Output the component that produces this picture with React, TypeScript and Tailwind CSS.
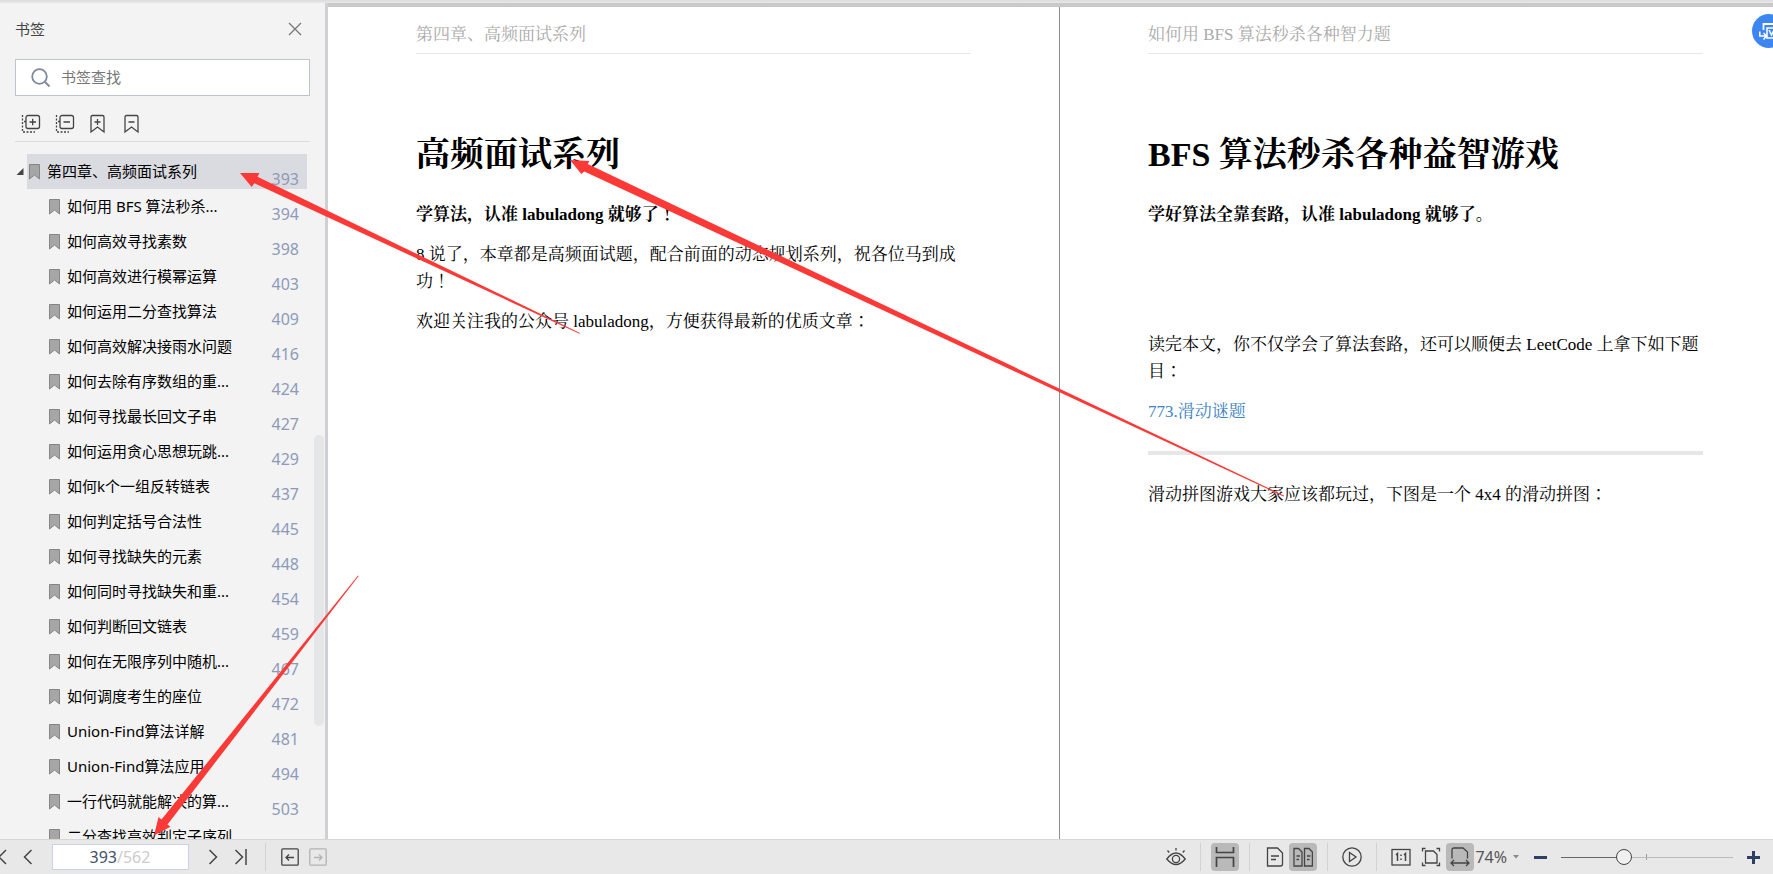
import type { ReactNode } from 'react'

interface Bookmark {
  title: string
  page: number
}

const BOOKMARKS: Bookmark[] = [
  { title: '如何用 BFS 算法秒杀...', page: 394 },
  { title: '如何高效寻找素数', page: 398 },
  { title: '如何高效进行模幂运算', page: 403 },
  { title: '如何运用二分查找算法', page: 409 },
  { title: '如何高效解决接雨水问题', page: 416 },
  { title: '如何去除有序数组的重...', page: 424 },
  { title: '如何寻找最长回文子串', page: 427 },
  { title: '如何运用贪心思想玩跳...', page: 429 },
  { title: '如何k个一组反转链表', page: 437 },
  { title: '如何判定括号合法性', page: 445 },
  { title: '如何寻找缺失的元素', page: 448 },
  { title: '如何同时寻找缺失和重...', page: 454 },
  { title: '如何判断回文链表', page: 459 },
  { title: '如何在无限序列中随机...', page: 467 },
  { title: '如何调度考生的座位', page: 472 },
  { title: 'Union-Find算法详解', page: 481 },
  { title: 'Union-Find算法应用', page: 494 },
  { title: '一行代码就能解决的算...', page: 503 },
]

interface IconProps {
  children: ReactNode
  width?: number
  height?: number
  className?: string
}

function Icon({ children, width = 20, height = 20, className }: IconProps) {
  return (
    <svg
      width={width}
      height={height}
      viewBox={`0 0 ${width} ${height}`}
      fill="none"
      stroke="currentColor"
      strokeWidth="1.3"
      className={className}
      aria-hidden="true"
    >
      {children}
    </svg>
  )
}

function BookmarkIcon() {
  return (
    <svg width="11" height="16" viewBox="0 0 11 16" className="shrink-0" aria-hidden="true">
      <path d="M.5 .5h10v14.5l-5-4-5 4z" fill="#a6a6a6" stroke="#858585" />
    </svg>
  )
}

function Sidebar() {
  return (
    <aside className="flex w-[328px] shrink-0 flex-col border-r-[3px] border-[#cfcfd4] bg-[#f3f3f3] pt-2">
      <div className="flex h-9 items-center justify-between pr-[23px] pl-[15px]">
        <h2 className="text-[15px] text-[#444]">书签</h2>
        <button type="button" aria-label="关闭">
          <Icon width={14} height={14} className="text-[#777]">
            <path d="M1 1l12 12M13 1L1 13" />
          </Icon>
        </button>
      </div>

      <label className="mx-[15px] mt-3 flex h-[37px] items-center gap-[10px] border border-[#bfc2cf] bg-white pl-[15px]">
        <Icon className="text-[#8089a0]">
          <circle cx="8.5" cy="8.5" r="7.3" strokeWidth="1.8" />
          <path d="M14 14l4.500 4.500" strokeWidth="2" />
        </Icon>
        <input
          type="text"
          aria-label="书签查找"
          placeholder="书签查找"
          className="min-w-0 flex-1 text-[15px] outline-none placeholder:text-[#777]"
        />
      </label>

      <div className="mx-[15px] flex h-[46px] items-center gap-[14px] border-b border-[#dcdce0] pt-[10px] pl-[6px] text-[#444]">
        <button type="button" aria-label="展开全部">
          <Icon>
            <rect x="5" y="1.500" width="13.500" height="13" rx="2" />
            <path d="M8.500 8h6.500M11.700 4.800v6.500M3 7.500h2" />
            <path d="M1.500 1v17M2 18h12" strokeDasharray="2 1.500" />
          </Icon>
        </button>
        <button type="button" aria-label="收起全部">
          <Icon>
            <rect x="5" y="1.500" width="13.500" height="13" rx="2" />
            <path d="M8.500 8h6.500M3 7.500h2" />
            <path d="M1.500 1v17M2 18h12" strokeDasharray="2 1.500" />
          </Icon>
        </button>
        <button type="button" aria-label="添加书签">
          <Icon>
            <path d="M2 18V3q0-1.500 1.500-1.500h10Q15 1.500 15 3v15l-6.500-5zM5.500 8h6M8.500 5v6" />
          </Icon>
        </button>
        <button type="button" aria-label="删除书签">
          <Icon>
            <path d="M2 18V3q0-1.500 1.500-1.500h10Q15 1.500 15 3v15l-6.500-5zM5.500 8h6" />
          </Icon>
        </button>
      </div>

      <div className="relative mt-3 min-h-0 flex-1 overflow-hidden">
        <div className="flex pl-4">
          <svg width="11" height="35" viewBox="0 0 11 35" className="shrink-0" aria-hidden="true">
            <path d="M7.500 14v7h-7z" fill="#444" />
          </svg>
          <div className="mr-[18px] flex h-[35px] flex-1 items-center bg-[#dadbe0] pr-2 pl-[2px]">
            <BookmarkIcon />
            <span className="ml-[7px] flex-1 text-[15px] text-black">第四章、高频面试系列</span>
            <span className="self-end text-base leading-5 text-[#8c9ab8]">393</span>
          </div>
        </div>
        <ul>
          {BOOKMARKS.map((item) => (
            <li key={item.title} className="mr-[18px] flex h-[35px] items-center pr-2 pl-[49px]">
              <BookmarkIcon />
              <span className="ml-[7px] flex-1 text-[15px] whitespace-nowrap text-black">
                {item.title}
              </span>
              <span className="self-end text-base leading-5 text-[#8c9ab8]">{item.page}</span>
            </li>
          ))}
          {/* scrolled half out of view */}
          <li className="mr-[18px] flex h-[35px] items-center pr-2 pl-[49px]">
            <BookmarkIcon />
            <span className="ml-[7px] flex-1 text-[15px] whitespace-nowrap text-black">
              二分查找高效判定子序列
            </span>
          </li>
        </ul>
        <div className="absolute top-[281px] right-[1px] h-[291px] w-[10px] rounded-full bg-[#e5e6e8]" />
      </div>
    </aside>
  )
}

interface PageProps {
  header: string
  title: string
  children: ReactNode
}

function Page({ header, title, children }: PageProps) {
  return (
    <article className="w-[731px] shrink-0 bg-white px-[88px] pt-4 text-[17px] leading-[27px] text-black">
      <header className="border-b border-[#e8e8e8] pb-[6px] leading-6 text-[#aaa]">{header}</header>
      <h1 className="mt-[77px] mb-[22px] text-[34px] leading-[48px] font-bold">{title}</h1>
      <div className="flex flex-col gap-[13px]">{children}</div>
    </article>
  )
}

function Divider() {
  return <span className="h-7 w-px shrink-0 bg-[#d2d2d2]" />
}

function ToolButton({
  label,
  active = false,
  children,
}: {
  label: string
  active?: boolean
  children: ReactNode
}) {
  return (
    <button
      type="button"
      aria-label={label}
      className={
        active
          ? 'flex size-7 shrink-0 items-center justify-center rounded bg-[#b9b9b9]'
          : 'flex size-7 shrink-0 items-center justify-center'
      }
    >
      {children}
    </button>
  )
}

function StatusBar() {
  return (
    <footer className="flex h-[35px] shrink-0 items-center justify-between border-t border-[#d6d6d6] bg-[#e8e8e8] text-[#444]">
      <div className="flex items-center">
        <button type="button" aria-label="第一页">
          <Icon width={14} height={16}>
            <path d="M6 1L-1 8l7 7" strokeWidth="1.5" />
          </Icon>
        </button>
        <button type="button" aria-label="上一页" className="mr-5 ml-[9px]">
          <Icon width={9} height={16}>
            <path d="M8.500 1l-7 7 7 7" strokeWidth="1.500" />
          </Icon>
        </button>
        <label className="flex h-[26px] w-[137px] items-center border border-[#c8d3ea] bg-white text-base">
          <input
            type="text"
            aria-label="页码"
            defaultValue="393"
            className="w-16 text-right text-[#44506b] outline-none"
          />
          <span className="text-[#ccc]">/562</span>
        </label>
        <button type="button" aria-label="下一页" className="ml-5">
          <Icon width={9} height={16}>
            <path d="M.5 1l7 7-7 7" strokeWidth="1.500" />
          </Icon>
        </button>
        <button type="button" aria-label="最后一页" className="mr-[18px] ml-[17px]">
          <Icon width={12} height={16}>
            <path d="M.5 1l7 7-7 7M11 0v16" strokeWidth="1.500" />
          </Icon>
        </button>
        <Divider />
        <button type="button" aria-label="后退" className="ml-[15px]">
          <Icon width={18} height={18}>
            <rect x=".8" y=".8" width="16.400" height="16.400" rx="1" />
            <path d="M5 9.500h8M8 6.500l-3 3 3 3" />
          </Icon>
        </button>
        <button type="button" aria-label="前进" className="ml-[10px] text-[#b3b3b3]">
          <Icon width={18} height={18}>
            <rect x=".8" y=".8" width="16.400" height="16.400" rx="1" />
            <path d="M5 9.500h8M10 6.500l3 3-3 3" />
          </Icon>
        </button>
      </div>

      <div className="flex items-center pr-[13px]">
        <ToolButton label="护眼模式">
          <Icon>
            <path d="M.8 12Q10 0 19.200 12 10 23 .8 12z" />
            <circle cx="10" cy="12" r="3.600" />
            <path d="M10 1v2.500M1.500 3.500l1.700 2M18.500 3.500l-1.700 2" />
          </Icon>
        </ToolButton>
        <span className="w-[10px]" />
        <Divider />
        <span className="w-[10px]" />
        <ToolButton label="连续阅读" active>
          <Icon>
            <path d="M1.500 0v5.500h17V0M1.500 20v-9.500h17V20" strokeWidth="1.700" />
          </Icon>
        </ToolButton>
        <span className="w-[10px]" />
        <Divider />
        <span className="w-[11px]" />
        <ToolButton label="单页">
          <Icon>
            <path d="M2.500 1h10l5 5v11q0 2-2 2h-13zM6 9h8M6 12.500h5" />
          </Icon>
        </ToolButton>
        <ToolButton label="双页" active>
          <Icon>
            <path d="M1 1.500h4.500L9 5v14H1zM3.500 9h3.500M3.500 12.500H6M11.500 1.500H16L19.400 5v14h-7.900zM14 9h3.500M14 12.500h2.500" />
          </Icon>
        </ToolButton>
        <span className="w-[10px]" />
        <Divider />
        <span className="w-[10px]" />
        <ToolButton label="播放">
          <Icon>
            <circle cx="10" cy="10" r="9.200" />
            <path d="M7.500 5.500v9l6.500-4.500z" />
          </Icon>
        </ToolButton>
        <span className="w-[10px]" />
        <Divider />
        <span className="w-[10px]" />
        <ToolButton label="实际大小">
          <Icon>
            <rect x="1" y="2.500" width="18" height="15.500" />
            <path d="M5 8l1.500-1.500v7.500M13 8l1.500-1.500v7.500M10 7.500v1.500M10 11.500v1.500" strokeWidth="1.500" />
          </Icon>
        </ToolButton>
        <span className="w-[2px]" />
        <ToolButton label="适合页面">
          <Icon>
            <path d="M4.500 4h8l3.500 3.500V16H4.500zM1.500 4.500v-3h3M15.500 1.500h3v3M18.500 15.500v3h-3M4.500 18.500h-3v-3" />
          </Icon>
        </ToolButton>
        <span className="w-px" />
        <ToolButton label="适合宽度" active>
          <Icon>
            <path d="M2 11.500V3q0-2 2-2h9l4.500 4v6.500M1 16h18M4 13l-3 3 3 3M16 13l3 3-3 3" />
          </Icon>
        </ToolButton>
        <button type="button" className="flex items-center gap-[6px] pl-px text-base text-[#555]">
          74%
          <svg width="6" height="4" viewBox="0 0 6 4" aria-hidden="true">
            <path d="M0 0h6L3 3.500z" fill="#888" />
          </svg>
        </button>
        <button type="button" aria-label="缩小" className="ml-[15px] h-[3px] w-[13px] bg-[#2e3f63]" />
        <div className="relative mx-[14px] flex items-center">
          <span className="absolute left-[85px] h-[6px] w-px bg-[#999]" />
          <input
            type="range"
            aria-label="缩放"
            min={0}
            max={100}
            defaultValue={35}
            className="relative h-4 w-[172px] appearance-none bg-[linear-gradient(to_right,#666_36%,#bbb_36%)] bg-[length:100%_1px] bg-center bg-no-repeat [&::-webkit-slider-thumb]:size-4 [&::-webkit-slider-thumb]:appearance-none [&::-webkit-slider-thumb]:rounded-full [&::-webkit-slider-thumb]:border [&::-webkit-slider-thumb]:border-[#444] [&::-webkit-slider-thumb]:bg-[#f0f0f0]"
          />
        </div>
        <button type="button" aria-label="放大">
          <Icon width={13} height={13} className="text-[#2e3f63]">
            <path d="M0 6.500h13M6.500 0v13" strokeWidth="3" />
          </Icon>
        </button>
      </div>
    </footer>
  )
}

// Red arrows drawn on top of the whole window
function Annotations() {
  return (
    <svg
      width="1773"
      height="874"
      viewBox="0 0 1773 874"
      fill="#fb3a38"
      className="pointer-events-none absolute top-0 left-0"
      aria-hidden="true"
    >
      <path d="M240 173l19.500 0-2 3.700L580 333l-.5.700L254.300 183.300l-2.600 3.700z" />
      <path d="M570 160l19.500 1-1.800 3L1284 495.500l-.5.900L584.300 171.500l-3 2.500z" />
      <path d="M154 835.500l4.500-18.500 3 2.500L358 575.500l.7.500L167.500 824.500l3 2.300z" />
    </svg>
  )
}

export default function App() {
  return (
    <div className="relative flex h-screen flex-col overflow-hidden bg-[#e8e8e8] font-['Noto_Sans','Noto_Sans_CJK_SC',sans-serif]">
      <div className="h-[3px] shrink-0 bg-linear-to-b from-[#dcdcdc] to-[#e8e8e8]" />
      <div className="flex min-h-0 flex-1">
        <Sidebar />
        <main className="relative flex min-w-0 flex-1 gap-px overflow-hidden border-t-4 border-[#c9c9c9] bg-[#8c8c8c] font-['Liberation_Serif','Noto_Serif_CJK_JP','Noto_Sans_CJK_SC',serif]">
          <Page header="第四章、高频面试系列" title="高频面试系列">
            <p className="font-bold">学算法，认准 labuladong 就够了！</p>
            <p>8 说了，本章都是高频面试题，配合前面的动态规划系列，祝各位马到成功！</p>
            <p>欢迎关注我的公众号 labuladong，方便获得最新的优质文章：</p>
          </Page>
          <Page header="如何用 BFS 算法秒杀各种智力题" title="BFS 算法秒杀各种益智游戏">
            <p className="font-bold">学好算法全靠套路，认准 labuladong 就够了。</p>
            <div className="h-[77px]" />
            <p>读完本文，你不仅学会了算法套路，还可以顺便去 LeetCode 上拿下如下题目：</p>
            <p>
              <a href="#773" className="text-[#4183c4]">
                773.滑动谜题
              </a>
            </p>
            <hr className="my-[13px] border-t-4 border-[#e7e7e7]" />
            <p>滑动拼图游戏大家应该都玩过，下图是一个 4x4 的滑动拼图：</p>
          </Page>
          <button
            type="button"
            aria-label="转换"
            className="absolute top-[7px] -right-[13px] flex size-[34px] items-center justify-center rounded-full bg-[#3d85f0] text-white"
          >
            <Icon>
              <path d="M4.500 9V3H19v3" strokeWidth="1.800" />
              <path d="M.8 10.500V15h6M4.500 12l3 3-3 3.500M8 7h11v10H8zM10 9l2.500 5L15 9l2.500 5" strokeWidth="1.500" />
            </Icon>
          </button>
        </main>
      </div>
      <StatusBar />
      <Annotations />
    </div>
  )
}
